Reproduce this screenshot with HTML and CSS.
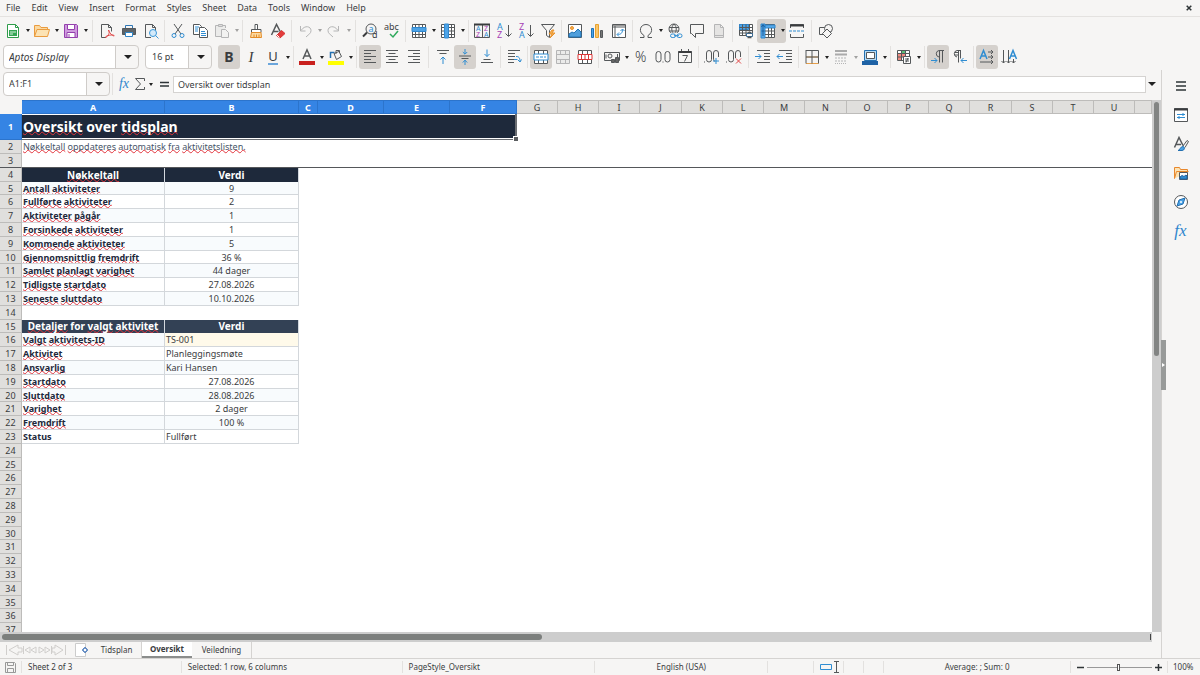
FILE: index.html
```html
<!DOCTYPE html>
<html lang="nb">
<head>
<meta charset="utf-8">
<meta name="viewport" content="width=device-width, initial-scale=1">
<title>Oversikt</title>
<link rel="stylesheet" href="styles.css">
</head>
<body>
<nav class="menubar" aria-label="Menu">
  <button>File</button><button>Edit</button><button>View</button><button>Insert</button><button>Format</button><button>Styles</button><button>Sheet</button><button>Data</button><button>Tools</button><button>Window</button><button>Help</button>
  <button class="close" aria-label="Close"><svg width="6" height="6" viewBox="0 0 6 6"><path class="thick dark" d="M.7.7l4.6 4.6M5.3.7L.7 5.3"/></svg></button>
</nav>

<div class="toolbar standard" role="toolbar" aria-label="Standard">
  <button class="tool" aria-label="New"><svg viewBox="0 0 16 16"><path d="M2.5 1.5h8l3 3v10h-11z" stroke="#2e9c4a" fill="#fff"/><path d="M10.500 1.500v3h3" stroke="#2e9c4a"/><path d="M4 7h8v6H4z" fill="#35a554" stroke="none"/><path d="M5 9h6M5 11h3" stroke="#d6f3dc"/></svg></button><button class="drop" aria-label="New options"></button>
  <button class="tool" aria-label="Open"><svg viewBox="0 0 16 16"><path d="M.5 13.500v-11h5l1.500 2h6.500v2.500" fill="#fbd9a0" stroke="#ea9c3f"/><path d="M.5 13.500l2.500-7h12.500l-2 7z" fill="#fce3b4" stroke="#ea9c3f"/></svg></button><button class="drop" aria-label="Open options"></button>
  <button class="tool" aria-label="Save"><svg viewBox="0 0 16 16"><path d="M1.500 1.500h12l1 1v12h-13z" fill="#d09bdf" stroke="#9440ad"/><path d="M4.500 1.500h7v5h-7zM4 9.500h8v5H4z" fill="#fff" stroke="#9440ad"/><path d="M6 11v3" stroke="#9440ad"/></svg></button><button class="drop" aria-label="Save options"></button>
  <i class="sep wide"></i>
  <button class="tool" aria-label="Export as PDF"><svg viewBox="0 0 16 16"><path d="M7 14.500H2.500v-13h7l3 3v4M9.500 1.500v3h3"/><path d="M9.500 7c2 3-1 7-3 7.500-1-1.500 7-3.500 8.500-2S11 12 9.500 7z" stroke="#e04545"/></svg></button>
  <button class="tool" aria-label="Print"><svg viewBox="0 0 16 16"><path d="M4.500 5v-2.500h7V5" stroke="#2f76b5"/><path d="M1.500 5.500h13v6h-13z" fill="#5d6469"/><path d="M4.500 9.500h7v4h-7z" fill="#fff" stroke="#2f86c9"/></svg></button>
  <button class="tool" aria-label="Print preview"><svg viewBox="0 0 16 16"><path d="M8 14.500H2.500v-13h7l3 3v3M9.500 1.500v3h3"/><circle cx="10" cy="10" r="3.500" fill="#d4eafa" stroke="#3a97d9"/><path d="M12.500 12.500l3 3" stroke="#3a97d9"/></svg></button>
  <i class="sep"></i>
  <button class="tool" aria-label="Cut"><svg viewBox="0 0 16 16"><path d="M4 1l7 10M12 1L5 11"/><circle cx="4" cy="12.500" r="2" stroke="#2f8dd2"/><circle cx="12" cy="12.500" r="2" stroke="#2f8dd2"/></svg></button>
  <button class="tool" aria-label="Copy"><svg viewBox="0 0 16 16"><path d="M1.500 1.500h6l2 2v8h-8z" fill="#fff"/><path d="M3 4h4M3 6h3M3 8h3" stroke="#2f8dd2"/><path d="M7.500 4.500h5l3 3v7h-8z" fill="#fff"/><path d="M9 8.500h4M9 10.500h5M9 12.500h5" stroke="#2f8dd2"/></svg></button>
  <button class="tool faded" aria-label="Paste"><svg viewBox="0 0 16 16"><path d="M7 13.500H1.500v-11h10V5" fill="#ddd"/><path d="M4.500 1.500h4v2h-4z" fill="#bbb"/><path d="M7.500 6.500h4l3 3v5h-7z" fill="#eee"/></svg></button><button class="drop faded" aria-label="Paste options"></button>
  <i class="sep"></i>
  <button class="tool" aria-label="Clone formatting"><svg viewBox="0 0 16 16"><path d="M7 1.500h2.500v5H7z" fill="#fff"/><path d="M3.500 6.500h9.500v3H3.500z" fill="#fff"/><path d="M3.500 9.500h9.500l.5 5h-11zM6 14v-2.500M8.500 14v-2.500M11 14v-2.500" fill="#fbd9a0" stroke="#e48c28"/></svg></button>
  <button class="tool" aria-label="Clear formatting"><svg viewBox="0 0 16 16"><path class="thick" d="M1.500 12L6.500 1.500 11 10M3.500 8.500h5"/><path d="M6.500 12.500l5-5 3.500 3-5 4.500z" fill="#e23c3c" stroke="#d73434"/><path d="M7 12l2.500 2.500" stroke="#fff"/></svg></button>
  <i class="sep"></i>
  <button class="tool faded" aria-label="Undo"><svg viewBox="0 0 16 16"><path d="M3.500 3v5h5M4 7.500c4-6 10-4 10 0 0 3-2 3.500-5 6.500"/></svg></button><button class="drop faded" aria-label="Undo history"></button>
  <button class="tool faded" aria-label="Redo"><svg viewBox="0 0 16 16"><path d="M12.500 3v5h-5M12 7.500C8 1.500 2 3.500 2 7.500 2 10.500 4 11 7 14"/></svg></button><button class="drop faded" aria-label="Redo history"></button>
  <i class="sep wide"></i>
  <button class="tool" aria-label="Find and replace"><svg viewBox="0 0 16 16"><circle cx="9" cy="6" r="5"/><path class="bold" d="M5 9.500L1 13.500"/><text x="6.500" y="8.500" class="g8 blue">a</text><text x="10" y="15" class="g8">d</text></svg></button>
  <button class="tool" aria-label="Spelling"><svg viewBox="0 0 16 16"><text x="0" y="7" class="g9">abc</text><path class="thick" d="M6 11l3 3 5-6" stroke="#2fa95c"/></svg></button>
  <i class="sep"></i>
  <button class="tool" aria-label="Row"><svg viewBox="0 0 16 16"><path d="M1.500 1.500h13v13h-13z" fill="#fff"/><path d="M4.500 1.500v13M8 1.500v13M11.500 1.500v13M1.500 11.500h13"/><path d="M1 4.500h14v4H1z" fill="#4da3e6" stroke="#2f86cd"/></svg></button><button class="drop" aria-label="Row options"></button>
  <button class="tool" aria-label="Column"><svg viewBox="0 0 16 16"><path d="M1.500 1.500h13v13h-13z" fill="#fff"/><path d="M1.500 4.500h13M1.500 8h13M1.500 11.500h13M11.500 1.500v13"/><path d="M4.500 1h4v14h-4z" fill="#4da3e6" stroke="#2f86cd"/></svg></button><button class="drop" aria-label="Column options"></button>
  <i class="sep"></i>
  <button class="tool" aria-label="Sort"><svg viewBox="0 0 16 16"><path d="M.5 1.500h15v13H.5zM8.500 2v12"/><path class="bold" d="M0 1.500h16"/><text x="2" y="8" class="g6 blue">A</text><text x="2" y="14" class="g6 purple">Z</text><text x="10" y="8" class="g6 purple">Z</text><text x="10" y="14" class="g6 blue">A</text></svg></button>
  <button class="tool" aria-label="Sort ascending"><svg viewBox="0 0 16 16"><text x="1" y="7" class="g8 blue">A</text><text x="1" y="15" class="g8 purple">Z</text><path d="M12.500 2v11M9.500 10.500l3 3 3-3"/></svg></button>
  <button class="tool" aria-label="Sort descending"><svg viewBox="0 0 16 16"><text x="1" y="7" class="g8 purple">Z</text><text x="1" y="15" class="g8 blue">A</text><path d="M12.500 2v11M9.500 10.500l3 3 3-3"/></svg></button>
  <button class="tool" aria-label="AutoFilter"><svg viewBox="0 0 16 16"><path d="M1.500 1.500h13l-5 6v7l-3-2v-5z"/><path d="M12 7l-3 4h3l-2 4 5-5h-3l2-3z" fill="#f6b04f" stroke="#e8922e"/></svg></button>
  <i class="sep"></i>
  <button class="tool" aria-label="Insert image"><svg viewBox="0 0 16 16"><path d="M1.500 1.500h13v13h-13z" fill="#fff"/><circle cx="5" cy="5" r="1.500" fill="#f6b04f" stroke="#e8922e"/><path d="M2 14v-3l3-2 2 1 4-4 3 3v5z" fill="#4f9fdc" stroke="#1f73b7"/></svg></button>
  <button class="tool" aria-label="Insert chart"><svg viewBox="0 0 16 16"><path d="M2.500 5.500h2v9h-2z" fill="#4da3e6" stroke="#1f73b7"/><path d="M6.500 1.500h3v13h-3z" fill="#f9c66d" stroke="#e8a22e"/><path d="M11.500 7.500h2v7h-2z" fill="#777"/></svg></button>
  <button class="tool" aria-label="Insert pivot table"><svg viewBox="0 0 16 16"><path d="M1.500 1.500h13v13h-13zM4 1.500v13M1.500 4h13" fill="#fff"/><path d="M2 2.500h12" stroke="#999"/><path d="M11.500 6.500c0 4-2 5-5 5M9.500 8l2-2 2 2M8 9.500l-2 2 2 2" stroke="#2f8dd2"/></svg></button>
  <i class="sep"></i>
  <button class="tool" aria-label="Special character"><svg viewBox="0 0 16 16"><path d="M2 14.500h4v-2C0 9 2 1.500 8 1.500s8 7.500 2 11v2h4"/></svg></button><button class="drop" aria-label="Special characters list"></button>
  <button class="tool" aria-label="Hyperlink"><svg viewBox="0 0 16 16"><circle cx="7" cy="6" r="5"/><path d="M7 1C4 4 4 8 7 11 10 8 10 4 7 1zM2 4.500h10M2 8h10"/><path d="M3 10h13v6H3z" fill="#f6f5f4" stroke="none"/><rect x="3.500" y="11" width="5" height="3.500" rx="1.700" stroke="#2f8dd2"/><rect x="10" y="11" width="5" height="3.500" rx="1.700" stroke="#2f8dd2"/><path d="M7 12.700h5" stroke="#2f8dd2"/></svg></button>
  <button class="tool" aria-label="Comment"><svg viewBox="0 0 16 16"><path d="M1.500 1.500h13v9h-8v4l-4-4h-1z"/></svg></button>
  <button class="tool faded" aria-label="Headers and footers"><svg viewBox="0 0 16 16"><path d="M3.500 1.500h6l3 3v10h-9zM9.500 1.500v3h3M4 12.500h8" fill="#ccc"/></svg></button>
  <i class="sep"></i>
  <button class="tool" aria-label="Print area"><svg viewBox="0 0 16 16"><path d="M1.500 1.500h13v11h-13z" fill="#fff"/><path d="M1.500 1.500h9v5h-9z" fill="#4da3e6" stroke="#2f86cd"/><path d="M4.500 1.500v11M8 1.500v11M11.500 1.500v7M1.500 4.500h13M1.500 7.500h13M1.500 10h8"/><path d="M8.500 10.500h6v3h-6z" fill="#fff" stroke="#3b6b94"/><path class="thick" d="M9.500 9.500h4M9.500 14.500h4"/></svg></button>
  <span class="split on"><button class="tool" aria-label="Freeze rows and columns"><svg viewBox="0 0 16 16"><path d="M1.500 1.500h13v13h-13z" fill="#fff"/><path d="M1 1h4v14H1zM5 2h10v3H5z" fill="#56a8e8" stroke="#2f86cd"/><path d="M8.500 5v10M11.500 5v10M5 8h10M5 11.500h10"/><path d="M3 2v11M1.500 4L3 1.500 4.500 4M1.500 8h3" stroke="#1a5f9e"/></svg></button><button class="drop" aria-label="Freeze options"></button></span>
  <button class="tool" aria-label="Split window"><svg viewBox="0 0 16 16"><path d="M1.500 5V1.500h13V5M1.500 11v3.500h13V11"/><path class="bold" d="M1 2.500h14"/><path d="M0 8h16" stroke="#2f8dd2" stroke-dasharray="3 1"/></svg></button>
  <i class="sep wide"></i>
  <button class="tool" aria-label="Show draw functions"><svg viewBox="0 0 16 16"><path d="M1.500 4.500h6v7h-6z"/><circle cx="10.500" cy="5.500" r="4" fill="#f6f5f4"/><path d="M9 6l4.500 4.500L9 15l-4.500-4.500z" fill="#f6f5f4"/></svg></button>
</div>

<div class="toolbar formatting" role="toolbar" aria-label="Formatting">
  <span class="combo font"><select aria-label="Font name"><option>Aptos Display</option></select></span>
  <span class="combo size"><select aria-label="Font size"><option>16 pt</option></select></span>
  <button class="tool on letter" aria-label="Bold"><b>B</b></button>
  <button class="tool letter" aria-label="Italic"><em>I</em></button>
  <button class="tool letter" aria-label="Underline"><span class="under">U</span></button><button class="drop" aria-label="Underline options"></button>
  <i class="sep"></i>
  <button class="tool" aria-label="Font color"><svg viewBox="0 0 16 16"><path class="thick" d="M4 10L8 .8 12 10M5.500 7h5"/><path d="M0 12h16v4H0z" fill="#c9211e" stroke="none"/></svg></button><button class="drop" aria-label="Font color list"></button>
  <button class="tool" aria-label="Highlighting"><svg viewBox="0 0 16 16"><path class="thick" d="M2.500 9V3.500h4" stroke="#2470b0"/><path d="M6 4.500l5-2 2.500 5-5 3zM8 5V1.500h3.500V4"/><path d="M0 12h16v4H0z" fill="#ff0" stroke="none"/></svg></button><button class="drop" aria-label="Highlighting list"></button>
  <i class="sep"></i>
  <button class="tool on" aria-label="Align left"><svg viewBox="0 0 16 16"><path d="M2 1.500h12M2 4.500h7M2 7.500h12M2 10.500h7M2 13.500h12"/></svg></button>
  <button class="tool" aria-label="Align center"><svg viewBox="0 0 16 16"><path d="M2 1.500h12M4.500 4.500h7M2 7.500h12M4.500 10.500h7M2 13.500h12"/></svg></button>
  <button class="tool" aria-label="Align right"><svg viewBox="0 0 16 16"><path d="M2 1.500h12M7 4.500h7M2 7.500h12M7 10.500h7M2 13.500h12"/></svg></button>
  <i class="sep wide"></i>
  <button class="tool" aria-label="Align top"><svg viewBox="0 0 16 16"><path d="M2 1.500h12M4.500 4.500h7"/><path d="M8 15V8M5.500 10.500L8 8l2.500 2.500" stroke="#2f8dd2"/></svg></button>
  <button class="tool on" aria-label="Center vertically"><svg viewBox="0 0 16 16"><path d="M2 7h12M4.500 9.500h7"/><path d="M8 0v5M5.800 3L8 5.200 10.200 3M8 16v-5M5.800 13.500L8 11.200l2.200 2.300" stroke="#2f8dd2"/></svg></button>
  <button class="tool" aria-label="Align bottom"><svg viewBox="0 0 16 16"><path d="M2 13.500h12M4.500 10.500h7"/><path d="M8 .5v7M5.500 5L8 7.500 10.500 5" stroke="#2f8dd2"/></svg></button>
  <i class="sep"></i>
  <button class="tool" aria-label="Wrap text"><svg viewBox="0 0 16 16"><path d="M2 1.500h12M2 4.500h7M2 7.500h7M2 10.500h6M2 13.500h6"/><path d="M10 7.500c3 0 4 1 4 5.500M11.500 10.500L14 13l1.500-2.500M8 10.500h3" stroke="#2f8dd2"/></svg></button>
  <i class="sep"></i>
  <button class="tool on" aria-label="Merge and center"><svg viewBox="0 0 16 16"><path d="M1.500 1.500h13v13h-13zM5.500 1.500v13M10.500 1.500v13" fill="#fff"/><path d="M1 5h14v6H1z" fill="#fff" stroke="#2f8dd2"/><path d="M3 8h10" stroke="#2f8dd2" stroke-dasharray="3 1"/></svg></button>
  <button class="tool faded" aria-label="Merge cells"><svg viewBox="0 0 16 16"><path d="M1.500 1.500h13v13h-13zM5.500 1.500v4M10.500 1.500v4M5.500 10.500v4M10.500 10.500v4M1.500 5.500h13v5h-13z" fill="#ddd"/></svg></button>
  <button class="tool" aria-label="Unmerge cells"><svg viewBox="0 0 16 16"><path d="M1.500 1.500h13v13h-13zM5.500 1.500v13M10.500 1.500v13" fill="#fff"/><path d="M1 5.500h14v5H1zM4.500 5.500v5M8 5.500v5M11.500 5.500v5" fill="#fff" stroke="#db3636"/></svg></button>
  <i class="sep"></i>
  <button class="tool" aria-label="Currency"><svg viewBox="0 0 16 16"><path d="M.5 3.500h15v8H.5z"/><circle cx="6" cy="7" r="2"/><path d="M2 5.500v4M13.500 5v3"/><path d="M7.500 10.500h3v3h-3zM11.500 8.500h3v5h-3z" fill="#666"/></svg></button><button class="drop" aria-label="Currency list"></button>
  <button class="tool" aria-label="Percent"><svg viewBox="0 0 16 16"><text x="2" y="13" class="g14">%</text></svg></button>
  <button class="tool" aria-label="Number"><svg viewBox="0 0 16 16"><rect x="1" y="2.500" width="5" height="10.500" rx="2.500"/><rect x="10" y="2.500" width="5" height="10.500" rx="2.500"/><path d="M7.500 13h1"/></svg></button>
  <button class="tool" aria-label="Date"><svg viewBox="0 0 16 16"><path d="M1.500 2.500h13v11h-13zM4.500 0v4M11.500 0v4M5.500 6.500h5l-3 6"/><path class="bold" d="M1.500 3h13"/></svg></button>
  <i class="sep"></i>
  <button class="tool" aria-label="Add decimal place"><svg viewBox="0 0 16 16"><path d="M0 13h1"/><rect x="2.500" y="1.500" width="5" height="11.500" rx="2.500"/><path d="M9.500 9V4a2.500 2.500 0 0 1 5 0v4M9.500 9c0 2 .5 3 1.500 3.500"/><path d="M9 12h6M12 9v6" stroke="#2f8dd2"/></svg></button>
  <button class="tool" aria-label="Delete decimal place"><svg viewBox="0 0 16 16"><path d="M0 13h1"/><rect x="2.500" y="1.500" width="5" height="11.500" rx="2.500"/><path d="M9.500 9V4a2.500 2.500 0 0 1 5 0v4"/><path d="M10 9.500l5 5M15 9.500l-5 5" stroke="#e04545"/></svg></button>
  <i class="sep wide"></i>
  <button class="tool" aria-label="Increase indent"><svg viewBox="0 0 16 16"><path d="M2 1.500h13M9 4.500h6M9 7.500h6M9 10.500h6M2 13.500h13"/><path d="M0 7.500h6M3.500 5L6 7.500 3.500 10" stroke="#2f8dd2"/></svg></button>
  <button class="tool" aria-label="Decrease indent"><svg viewBox="0 0 16 16"><path d="M2 1.500h13M9 4.500h6M9 7.500h6M9 10.500h6M2 13.500h13"/><path d="M0 7.500h6M2.500 5L0 7.500 2.500 10" stroke="#2f8dd2"/></svg></button>
  <i class="sep"></i>
  <button class="tool" aria-label="Borders"><svg viewBox="0 0 16 16"><path d="M2 14.500h12.500M2 8h12" stroke="#e8a04a"/><path d="M2 1.500h12.500v13M2 1v13.500M8 1.500v13M2 8h12"/></svg></button><button class="drop" aria-label="Borders list"></button>
  <button class="tool faded" aria-label="Border style"><svg viewBox="0 0 16 16"><path class="bold" d="M2 2h12M2 5.500h12"/><path d="M2 9h12M2 12h12" stroke-dasharray="2 1"/><path d="M2 14.500h12" stroke-dasharray="1 1"/></svg></button><button class="drop faded" aria-label="Border style list"></button>
  <button class="tool" aria-label="Border color"><svg viewBox="0 0 16 16"><path d="M2.500 1.500h12v10h-12z" fill="#b8dcf6" stroke="#2470b0"/><path d="M4.500 3.500h8v6h-8z" fill="#fff"/><path d="M0 12h16v4H0z" fill="#1f62a5" stroke="none"/></svg></button><button class="drop" aria-label="Border color list"></button>
  <i class="sep"></i>
  <button class="tool" aria-label="Conditional formatting"><svg viewBox="0 0 16 16"><path d="M1.500 1.500h12v10h-12z" fill="#fff"/><path d="M5 2h5v2.500H5z" fill="#5cc078" stroke="none"/><path d="M2 5h3v6H2zM5 5h5v3H5z" fill="#f08a80" stroke="none"/><path d="M5.500 1.500v10M9.500 1.500v6M1.500 4.500h12M1.500 8h8"/><path d="M7.500 7.500h7v7h-7z" fill="#fff"/><path d="M9 10h4M9 12h4M12 9l-2 4.500"/></svg></button><button class="drop" aria-label="Conditional formatting list"></button>
  <i class="sep"></i>
  <button class="tool on" aria-label="Left to right"><svg viewBox="0 0 16 16"><path d="M14 1.500H9a3.300 3.300 0 0 0 0 6.500M9.500 1.500v12M12.500 1.500v12"/><path d="M1 11.500h6M4.500 9L7 11.500 4.500 14" stroke="#2f8dd2"/></svg></button>
  <button class="tool" aria-label="Right to left"><svg viewBox="0 0 16 16"><path d="M9 1.500H5A3.300 3.300 0 0 0 5 8M6.500 1.500v12M8.500 1.500v8M3 3.500h3M3 6h3"/><path d="M9 11.500h6M11.500 9L9 11.500l2.500 2.500" stroke="#2f8dd2"/></svg></button>
  <i class="sep"></i>
  <button class="tool on" aria-label="Text direction left to right"><svg viewBox="0 0 16 16"><path class="thick" d="M1 10L4.500 1.500 8 10M2.200 7h4.600" stroke="#2f8dd2"/><path d="M9 3h5M12 1l2 2-2 2M9 8h5M12 6l2 2-2 2M1 13h13M12 11l2 2-2 2"/></svg></button>
  <button class="tool" aria-label="Text direction top to bottom"><svg viewBox="0 0 16 16"><path class="thick" d="M8.500 10L12 1.500l3.500 8.500M9.700 7h4.600" stroke="#2f8dd2"/><path d="M2.500 1v13M.5 12l2 2 2-2M7.500 1v13M5.500 12l2 2 2-2M12.500 10v4M10.500 12l2 2 2-2"/></svg></button>
</div>

<div class="workspace">
  <main class="document">
    <div class="formula-bar">
      <span class="combo name"><select aria-label="Name box"><option>A1:F1</option></select></span>
      <i class="sep"></i>
      <button class="tool wizard" aria-label="Function wizard"><span class="fx">fx</span></button>
      <button class="tool sigma" aria-label="Select function"><svg viewBox="0 0 16 16"><path d="M12.500 5V2.500h-9l5 5.500-5 5.500h9V11"/></svg></button><button class="drop wide" aria-label="Function list"></button>
      <button class="tool wizard" aria-label="Formula"><svg viewBox="0 0 16 16"><path class="thick dark" d="M4 6.500h9M4 10h9"/></svg></button>
      <input type="text" aria-label="Input line" value="Oversikt over tidsplan">
      <button class="drop big" aria-label="Expand formula bar"></button>
    </div>

    <div class="sheet-area">
      <div class="sheet">
        <table>
          <colgroup><col class="c-head"><col class="c-a"><col class="c-b"><col class="c-c"><col class="c-d"><col class="c-d"><col class="c-f"><col class="c-n"><col class="c-n"><col class="c-n"><col class="c-w"><col class="c-n"><col class="c-n"><col class="c-n"><col class="c-w"><col class="c-n"><col class="c-n"><col class="c-n"><col class="c-w"><col class="c-n"><col class="c-n"><col class="c-n"><col></colgroup>
          <thead>
            <tr><td class="corner"></td><th class="sel">A</th><th class="sel">B</th><th class="sel">C</th><th class="sel">D</th><th class="sel">E</th><th class="sel">F</th><th>G</th><th>H</th><th>I</th><th>J</th><th>K</th><th>L</th><th>M</th><th>N</th><th>O</th><th>P</th><th>Q</th><th>R</th><th>S</th><th>T</th><th>U</th><th></th></tr>
          </thead>
          <tbody>
            <tr class="title-row"><th class="sel">1</th><td colspan="6" class="title"><u>Oversikt</u> over <u>tidsplan</u></td><td colspan="16"></td></tr>
            <tr><th>2</th><td colspan="22" class="note"><u>Nøkkeltall</u> <u>oppdateres</u> <u>automatisk</u> <u>fra</u> <u>aktivitetslisten.</u></td></tr>
            <tr class="frozen"><th>3</th><td colspan="22"></td></tr>
            <tr class="head"><th>4</th><td><u>Nøkkeltall</u></td><td>Verdi</td><td colspan="20"></td></tr>
            <tr class="data tint"><th>5</th><td><u>Antall</u> <u>aktiviteter</u></td><td>9</td></tr>
            <tr class="data"><th>6</th><td><u>Fullførte</u> <u>aktiviteter</u></td><td>2</td></tr>
            <tr class="data tint"><th>7</th><td><u>Aktiviteter</u> <u>pågår</u></td><td>1</td></tr>
            <tr class="data"><th>8</th><td><u>Forsinkede</u> <u>aktiviteter</u></td><td>1</td></tr>
            <tr class="data tint"><th>9</th><td><u>Kommende</u> <u>aktiviteter</u></td><td>5</td></tr>
            <tr class="data"><th>10</th><td><u>Gjennomsnittlig</u> <u>fremdrift</u></td><td>36 %</td></tr>
            <tr class="data tint"><th>11</th><td><u>Samlet</u> <u>planlagt</u> <u>varighet</u></td><td>44 dager</td></tr>
            <tr class="data"><th>12</th><td><u>Tidligste</u> <u>startdato</u></td><td>27.08.2026</td></tr>
            <tr class="data tint"><th>13</th><td><u>Seneste</u> <u>sluttdato</u></td><td>10.10.2026</td></tr>
            <tr class="gap"><th>14</th><td colspan="2"></td></tr>
            <tr class="head second"><th>15</th><td><u>Detaljer</u> for <u>valgt</u> <u>aktivitet</u></td><td>Verdi</td></tr>
            <tr class="data tint"><th>16</th><td><u>Valgt</u> <u>aktivitets-ID</u></td><td class="text picked">TS-001</td></tr>
            <tr class="data"><th>17</th><td><u>Aktivitet</u></td><td class="text">Planleggingsmøte</td></tr>
            <tr class="data tint"><th>18</th><td><u>Ansvarlig</u></td><td class="text">Kari Hansen</td></tr>
            <tr class="data"><th>19</th><td><u>Startdato</u></td><td>27.08.2026</td></tr>
            <tr class="data tint"><th>20</th><td><u>Sluttdato</u></td><td>28.08.2026</td></tr>
            <tr class="data"><th>21</th><td><u>Varighet</u></td><td>2 dager</td></tr>
            <tr class="data tint"><th>22</th><td><u>Fremdrift</u></td><td>100 %</td></tr>
            <tr class="data"><th>23</th><td>Status</td><td class="text">Fullført</td></tr>
            <tr><th>24</th></tr>
            <tr><th>25</th></tr>
            <tr><th>26</th></tr>
            <tr><th>27</th></tr>
            <tr><th>28</th></tr>
            <tr><th>29</th></tr>
            <tr><th>30</th></tr>
            <tr><th>31</th></tr>
            <tr><th>32</th></tr>
            <tr><th>33</th></tr>
            <tr><th>34</th></tr>
            <tr><th>35</th></tr>
            <tr><th>36</th></tr>
            <tr><th>37</th></tr>
          </tbody>
        </table>
      </div>
      <div class="vscroll"><div class="thumb"></div></div>
    </div>

    <div class="hscroll"><div class="thumb"></div><div class="grip"></div></div>

    <div class="tabs">
      <svg class="tab-nav" width="62" height="14" viewBox="0 0 62 14"><path d="M1.500 2v10M13 2L4 7l9 5V9h4V5h-4zM18.500 3v8M25 4l-5 3 5 3zM31 4l-5 3 5 3zM34 4l5 3-5 3zM40 4l5 3-5 3zM46.500 3v8M50 2l8 5-8 5V9h-3V5h3zM60.500 2v10"/></svg>
      <button class="add-sheet" aria-label="Add sheet"><svg width="14" height="14" viewBox="0 0 14 14"><path d="M.5.500h10v13H.5z" fill="#fff" stroke="#ccc"/><circle cx="10" cy="7" r="2" fill="#fff" stroke="#2a63b0"/><path d="M10 4v1M10 9v1M7 7h1M12 7h1" stroke="#2a63b0"/></svg></button>
      <button class="tab">Tidsplan</button><button class="tab active">Oversikt</button><button class="tab last">Veiledning</button>
    </div>
  </main>

  <aside class="sidebar">
    <button class="handle" aria-label="Hide sidebar"></button>
    <button aria-label="Sidebar settings"><svg viewBox="0 0 16 16"><path class="thick dark" d="M3 4h10M3 8h10M3 12h10"/></svg></button>
    <button aria-label="Properties"><svg viewBox="0 0 16 16"><path d="M1.500 1.500h13v13h-13z" fill="#fff"/><path class="bold" d="M1 2.500h14"/><path d="M4 7.500h8M4 10.500h8M10 6v3M6 9v3" stroke="#2f8dd2"/></svg></button>
    <button aria-label="Styles"><svg viewBox="0 0 16 16"><path class="thick" d="M1.500 11.500L6 1.500l4 8M3 8.500h5"/><path d="M10 10l4-5.500 1.500 1-3.500 6"/><path d="M5 14.500c2 0 2-4 5-4 2 0 2 4-1 4z" fill="#4da3e6" stroke="#2470b0"/></svg></button>
    <button aria-label="Gallery"><svg viewBox="0 0 16 16"><path d="M1.500 13.500v-11h5l1 2h7v3M1.500 13.500l2-7h12" fill="#fce3b4" stroke="#e8872c"/><path d="M6.500 7.500h8v7h-8z" fill="#fff"/><path d="M7 14v-2l2-1.500 2 1L13 10l1 1v3z" fill="#2f8dd2" stroke="#1f62a5"/></svg></button>
    <button aria-label="Navigator"><svg viewBox="0 0 16 16"><circle cx="8" cy="8" r="6.500" fill="#fff"/><path d="M12 4l-2 6-6 2 2-6z" fill="#4da3e6" stroke="#2470b0"/><circle cx="8" cy="8" r="1" fill="#fff" stroke="none"/></svg></button>
    <button aria-label="Functions"><span class="fx large">fx</span></button>
  </aside>
</div>

<footer class="status">
  <span class="center"><svg width="11" height="11" viewBox="0 0 11 11"><path d="M.5.500h9l1 1v9H.5zM2.500.500v3h6v-3M2.500 10.500v-4h6v4" stroke="#999"/></svg></span>
  <span>Sheet 2 of 3</span>
  <span>Selected: 1 row, 6 columns</span>
  <span>PageStyle_Oversikt</span>
  <span class="center">English (USA)</span>
  <span></span>
  <span class="center"><svg width="20" height="12" viewBox="0 0 20 12"><path d="M1.500 3.500h11v5h-11z" stroke="#2f8dd2"/><path d="M15 .5h5M17.500.5v11M15 11.500h5"/></svg></span>
  <span></span>
  <span></span>
  <span class="center">Average: ; Sum: 0</span>
  <span class="zoom"><button aria-label="Zoom out"><svg width="7" height="7" viewBox="0 0 7 7"><path class="thick dark" d="M0 3.500h7"/></svg></button><input type="range" min="0" max="100" value="49" aria-label="Zoom"><button aria-label="Zoom in"><svg width="7" height="7" viewBox="0 0 7 7"><path class="thick dark" d="M0 3.500h7M3.500 0v7"/></svg></button></span>
  <span class="percent">100%</span>
</footer>
</body>
</html>
```

FILE: styles.css
```css
:root {
  --bg: #f6f5f4;
  --ink: #3a3c3e;
  --line: #d5d3d1;
  --head: #e0dfdd;
  --head-line: #bdbcba;
  --accent: #3584e4;
}

* { box-sizing: border-box; }

body {
  margin: 0;
  height: 100vh;
  display: flex;
  flex-direction: column;
  overflow: hidden;
  background: var(--bg);
  color: var(--ink);
  font: 9px/12px "Noto Sans", "Open Sans", sans-serif;
}

button {
  margin: 0;
  padding: 0;
  border: 0;
  background: none;
  color: inherit;
  font: inherit;
}

svg {
  display: block;
  fill: none;
  stroke: #55585a;
  stroke-width: 1;
}

svg .thick { stroke-width: 1.5; }
svg .bold { stroke-width: 2; stroke: #3a3c3e; }
svg .dark { stroke: #2e3436; }
svg text { fill: #3a3c3e; stroke: none; }
svg .blue { fill: #2f8dd2; }
svg .purple { fill: #a63fb5; }
.g6 { font-size: 7px; }
.g8 { font-size: 9px; }
.g9 { font-size: 9px; }
.g14 { font-size: 14px; font-weight: 300; }

/* Menu */
.menubar {
  flex: none;
  display: flex;
  align-items: center;
  gap: 11px;
  height: 17px;
  padding: 0 8px 0 6px;
  border-bottom: 1px solid #e4e2e0;
}
.menubar .close { margin-left: auto; }

/* Toolbars */
.toolbar {
  flex: none;
  display: flex;
  align-items: center;
  padding-left: 2px;
}
.standard { height: 27px; }
.formatting { height: 26px; padding-left: 3px; }

.tool {
  flex: none;
  display: flex;
  align-items: center;
  justify-content: center;
  width: 22px;
  height: 24px;
  border-radius: 3px;
}
.tool svg { width: 16px; height: 16px; overflow: visible; }
.on { background: #d5d1cd; border-radius: 3px; }
.split { display: flex; }
.letter { font-size: 14px; }
.letter em { font-family: "Liberation Serif", serif; font-size: 15px; }
.under { line-height: 14px; border-bottom: 2px solid #6ba6dc; font-size: 13px; }

.drop {
  flex: none;
  display: flex;
  align-items: center;
  justify-content: center;
  width: 7px;
  height: 24px;
}
.drop::after,
.combo::after {
  content: "";
  border: 2px solid transparent;
  border-top: 3px solid #222;
  border-bottom: 0;
}
.drop.wide { width: 9px; }
.drop.big { width: 12px; }
.drop.big::after,
.combo::after { border-width: 4px 4px 0; }
.faded { opacity: .4; }

.sep {
  flex: none;
  width: 1px;
  height: 22px;
  margin: 0 2px;
  background: #e3e1df;
}
.sep.wide { margin: 0 3px; }

.combo {
  flex: none;
  display: flex;
  align-items: center;
  position: relative;
  height: 24px;
}
.combo::after {
  position: absolute;
  right: 7px;
  pointer-events: none;
}
.combo select {
  appearance: none;
  width: 100%;
  height: 100%;
  padding: 0 24px 0 5px;
  border: 1px solid #cfccc9;
  border-radius: 4px;
  background: linear-gradient(to left, #f6f5f4 22px, #cfccc9 22px, #cfccc9 23px, #fff 23px);
  color: var(--ink);
  font: inherit;
  font-size: 10px;
}
.font { width: 136px; margin-right: 6px; }
.font select { font-style: italic; }
.size { width: 67px; margin-right: 6px; }
.size select { font-size: 9px; padding-left: 6px; }
.name { width: 107px; height: 24px; }
.name select { font-size: 9px; }

/* Document and sidebar */
.workspace { flex: 1; min-height: 0; display: flex; }
.document { flex: 1; min-width: 0; display: flex; flex-direction: column; }

.formula-bar {
  flex: none;
  display: flex;
  align-items: center;
  height: 30px;
  padding: 0 3px 2px 3px;
}
.formula-bar .wizard { width: 18px; }
.formula-bar .sigma { width: 13px; }
.formula-bar input {
  flex: 1;
  min-width: 0;
  height: 17px;
  padding: 0 4px;
  border: 1px solid var(--line);
  background: #fff;
  color: var(--ink);
  font: inherit;
}
.fx { font: italic 14px/16px "Liberation Serif", serif; color: #2f86cd; }
.fx.large { font-size: 17px; }

.sheet-area { flex: 1; min-height: 0; display: flex; }
.sheet { flex: 1; min-width: 0; overflow: hidden; background: #fff; }

table {
  width: 100%;
  table-layout: fixed;
  border-spacing: 0;
}
.c-head { width: 22px; }
.c-a { width: 143px; }
.c-b { width: 134px; }
.c-c { width: 19px; }
.c-d { width: 66px; }
.c-f { width: 67px; }
.c-n { width: 41px; }
.c-w { width: 42px; }

th, td {
  height: 14px;
  padding: 0;
  line-height: 12px;
  white-space: nowrap;
  overflow: hidden;
}
th {
  background: var(--head);
  border: solid var(--head-line);
  border-width: 0 1px 1px 0;
  font-weight: 400;
  text-align: center;
}
thead th { border-top-width: 1px; line-height: 11px; }
.corner { background: var(--bg); }
th.sel { background: var(--accent); border-color: #2c74cc; color: #fff; font-weight: 700; }

tbody tr:nth-child(5n) > * { height: 13px; line-height: 11px; }

td u {
  text-decoration: underline wavy #e2343c 1px;
  text-underline-offset: -1px;
  text-decoration-skip-ink: none;
}

.title-row > * { height: 26px; }
.title {
  position: relative;
  overflow: visible;
  padding-left: 1px;
  border: solid #6a6d72;
  border-width: 0 2px 1px 0;
  background: #1e293b;
  box-shadow: inset 0 1px #fff, inset 0 -1px #fff;
  color: #fff;
  font-size: 14px;
  font-weight: 700;
  line-height: 22px;
}
.title::after {
  content: "";
  position: absolute;
  right: -3px;
  bottom: -2px;
  width: 4px;
  height: 4px;
  border: solid #fff;
  border-width: 1px 0 0 1px;
  background: #5a5d60;
}
.note { padding-left: 1px; color: #475569; }
.frozen td, .frozen th { border-bottom: 1px solid #55575a; }

.head td:nth-child(2), .head td:nth-child(3) {
  border-right: 1px solid #d3d8de;
  background: #1e293b;
  color: #fff;
  font-size: 10px;
  font-weight: 700;
  text-align: center;
}
.head.second td:nth-child(n) { background: #334155; }

.data td {
  border: solid #d3d7db;
  border-width: 0 1px 1px 0;
  text-align: center;
}
.data.tint td { background: #f8fbfd; }
.data td:nth-child(2) {
  padding-left: 1px;
  color: #1e293b;
  font-weight: 700;
  text-align: left;
}
.data td.text { padding-left: 1px; text-align: left; }
.data td.picked { background: #fffaea; }

.vscroll {
  flex: none;
  width: 9px;
  padding: 2px 2px 0;
  background: #cdcdcd;
}
.vscroll .thumb { height: 48%; border-radius: 3px; background: #828483; }

.hscroll {
  flex: none;
  display: flex;
  align-items: center;
  justify-content: space-between;
  height: 10px;
  margin-right: 9px;
  padding: 0 1px 0 2px;
  background: #cdcdcd;
}
.hscroll .thumb { width: 47%; height: 6px; border-radius: 3px; background: #7c7f7d; }
.hscroll .grip { width: 1px; height: 6px; background: #444; }

.tabs {
  flex: none;
  display: flex;
  align-items: stretch;
  height: 16px;
  padding-left: 5px;
  font-size: 8px;
}
.tab-nav { margin-top: 1px; stroke: #d0cecc; }
.add-sheet { margin: 0 3px 0 8px; }
.tab { width: 50px; border-right: 1px solid var(--line); }
.tab.active { border-right: 0; border-bottom: 2px solid #8b8d8c; background: #fff; font-weight: 700; line-height: 14px; }
.tab.last { width: 60px; }

.sidebar {
  flex: none;
  position: relative;
  display: flex;
  flex-direction: column;
  align-items: center;
  gap: 13px;
  width: 39px;
  padding: 8px 1px 0 0;
  border-left: 1px solid var(--line);
}
.sidebar button { flex: none; width: 16px; height: 16px; }
.sidebar svg { width: 16px; height: 16px; }
.sidebar .handle {
  position: absolute;
  left: -1px;
  top: 46%;
  width: 5px;
  height: 50px;
  background: #989a99;
}
.handle::after {
  content: "";
  display: block;
  width: 0;
  margin-left: 1px;
  border: 2px solid transparent;
  border-left: 3px solid #fff;
  border-right: 0;
}

/* Status bar */
.status {
  flex: none;
  display: grid;
  grid-template-columns: 22px 160fr 221fr 193fr 173fr 46px 30px 20px 20px 187fr 97px 32px;
  height: 17px;
  border-top: 1px solid var(--line);
  font-size: 8px;
}
.status > span {
  display: flex;
  align-items: center;
  margin: 2px 0;
  padding-left: 6px;
  border-right: 1px solid #e3e1df;
  white-space: nowrap;
}
.status > .center { justify-content: center; padding: 0; }
.status > .zoom { justify-content: space-between; padding: 0 5px 0 6px; gap: 3px; }
.status > .percent { border: 0; padding-left: 5px; }
.zoom input {
  appearance: none;
  flex: 1;
  min-width: 0;
  height: 8px;
  margin: 0;
  background: linear-gradient(#999, #999) center / 100% 1px no-repeat;
}
.zoom input::-webkit-slider-thumb {
  appearance: none;
  width: 3px;
  height: 7px;
  border: 1px solid #555;
  background: #fff;
}
```
